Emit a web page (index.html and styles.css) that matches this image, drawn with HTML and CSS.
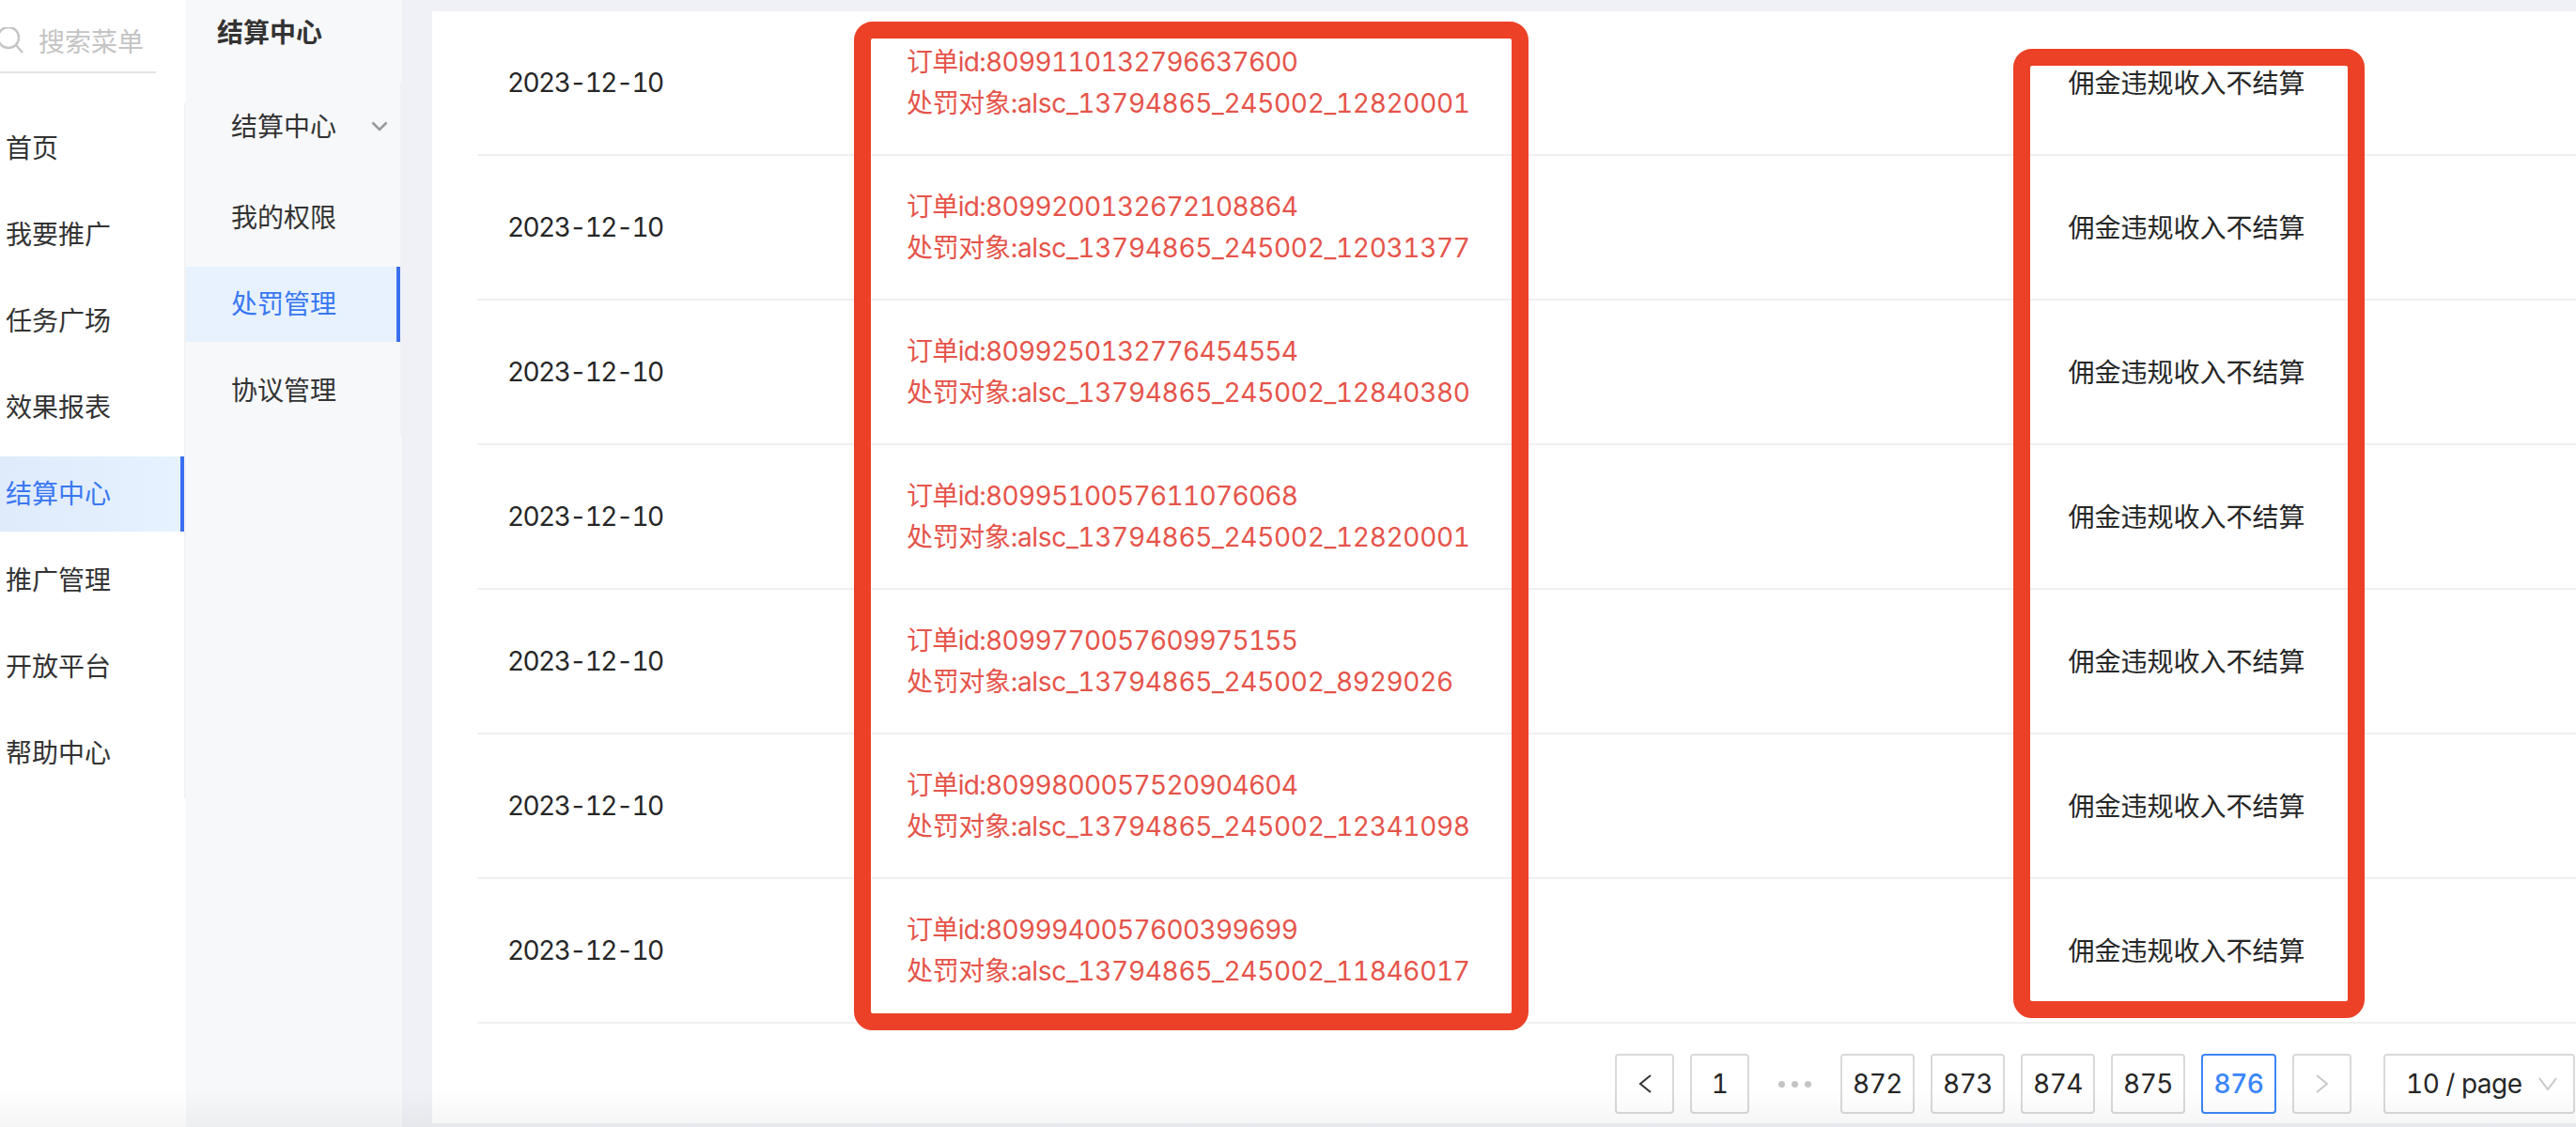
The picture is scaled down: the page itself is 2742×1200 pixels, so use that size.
FILE: index.html
```html
<!DOCTYPE html>
<html lang="zh">
<head>
<meta charset="utf-8">
<title>处罚管理</title>
<link rel="stylesheet" href="styles.css">
</head>
<body>
<div class="app">
  <aside class="nav">
    <div class="search">
      <svg class="search-icon" width="26" height="28" viewBox="0 0 26 28"><circle cx="10" cy="11" r="11" fill="none" stroke="#c4c4c4" stroke-width="2.4"/><path d="M18 19l7 8" fill="none" stroke="#c4c4c4" stroke-width="2.4"/></svg>
      <span>搜索菜单</span>
    </div>
    <ul class="nav-list">
      <li class="nav-item">首页</li>
      <li class="nav-item">我要推广</li>
      <li class="nav-item">任务广场</li>
      <li class="nav-item">效果报表</li>
      <li class="nav-item active">结算中心</li>
      <li class="nav-item">推广管理</li>
      <li class="nav-item">开放平台</li>
      <li class="nav-item">帮助中心</li>
    </ul>
  </aside>
  <aside class="subnav">
    <div class="subnav-title">结算中心</div>
    <ul class="subnav-list">
      <li class="sub-item first">结算中心
        <svg class="chev" width="18" height="11" viewBox="0 0 18 11"><path d="M1.500 1.500L9 9l7.500-7.500" fill="none" stroke="#999" stroke-width="2.6"/></svg>
      </li>
      <li class="sub-item">我的权限</li>
      <li class="sub-item active">处罚管理</li>
      <li class="sub-item">协议管理</li>
    </ul>
  </aside>
  <main class="card">
    <div class="table">
      <div class="row"><div class="date">2023-12-10</div><div class="info"><div class="oid">订单id:8099110132796637600</div><div class="tgt">处罚对象:alsc_13794865_245002_12820001</div></div><div class="result">佣金违规收入不结算</div></div>
      <div class="row"><div class="date">2023-12-10</div><div class="info"><div class="oid">订单id:8099200132672108864</div><div class="tgt">处罚对象:alsc_13794865_245002_12031377</div></div><div class="result">佣金违规收入不结算</div></div>
      <div class="row"><div class="date">2023-12-10</div><div class="info"><div class="oid">订单id:8099250132776454554</div><div class="tgt">处罚对象:alsc_13794865_245002_12840380</div></div><div class="result">佣金违规收入不结算</div></div>
      <div class="row"><div class="date">2023-12-10</div><div class="info"><div class="oid">订单id:8099510057611076068</div><div class="tgt">处罚对象:alsc_13794865_245002_12820001</div></div><div class="result">佣金违规收入不结算</div></div>
      <div class="row"><div class="date">2023-12-10</div><div class="info"><div class="oid">订单id:8099770057609975155</div><div class="tgt">处罚对象:alsc_13794865_245002_8929026</div></div><div class="result">佣金违规收入不结算</div></div>
      <div class="row"><div class="date">2023-12-10</div><div class="info"><div class="oid">订单id:8099800057520904604</div><div class="tgt">处罚对象:alsc_13794865_245002_12341098</div></div><div class="result">佣金违规收入不结算</div></div>
      <div class="row"><div class="date">2023-12-10</div><div class="info"><div class="oid">订单id:8099940057600399699</div><div class="tgt">处罚对象:alsc_13794865_245002_11846017</div></div><div class="result">佣金违规收入不结算</div></div>
    </div>
    <nav class="pager">
      <span class="btn icon"><svg width="14" height="20" viewBox="0 0 14 20"><path d="M13 1L2 10l11 9" fill="none" stroke="#333" stroke-width="2"/></svg></span>
      <span class="btn icon">1</span>
      <span class="dots"><i></i><i></i><i></i></span>
      <span class="btn">872</span>
      <span class="btn">873</span>
      <span class="btn">874</span>
      <span class="btn">875</span>
      <span class="btn current">876</span>
      <span class="btn icon"><svg width="14" height="20" viewBox="0 0 14 20"><path d="M1 1l11 9-11 9" fill="none" stroke="#c8c8c8" stroke-width="2"/></svg></span>
      <span class="select">10 / page<svg width="20" height="14" viewBox="0 0 20 14"><path d="M1 1l9 12 9-12" fill="none" stroke="#c8c8c8" stroke-width="2"/></svg></span>
    </nav>
  </main>
</div>
<div class="mark mark-info"></div>
<div class="mark mark-result"></div>
<div class="fade"></div>
</body>
</html>
```
FILE: styles.css
```css
* { box-sizing: border-box; }
html, body { margin: 0; height: 100%; }
body {
  width: 2742px;
  height: 1200px;
  overflow: hidden;
  position: relative;
  background: #f0f1f6;
  font-family: Inter, "Noto Sans CJK SC", sans-serif;
  font-size: 28px;
  font-variant-numeric: tabular-nums;
  color: #333;
}
ul { list-style: none; margin: 0; padding: 0; }
.app { display: flex; height: 1200px; }

.nav { width: 198px; background: #fff; flex: none; }
.search {
  display: flex;
  align-items: center;
  gap: 16px;
  width: 166px;
  height: 78px;
  padding-top: 10px;
  border-bottom: 2px solid #e4e4e4;
  color: #c4c4c4;
  overflow: hidden;
}
.search-icon { margin-left: -1px; flex: none; }
.search span { white-space: nowrap; }
.nav-list {
  margin-top: 32px;
  padding-top: 8px;
  height: 740px;
  border-right: 2px solid #f2f2f3;
}
.nav-item {
  height: 80px;
  margin-bottom: 12px;
  padding-left: 6px;
  line-height: 80px;
  width: 196px;
}
.nav-item.active {
  background: linear-gradient(90deg, #dfeafb, #e6f2ff);
  border-right: 4px solid #3a6ff0;
  color: #3a78f2;
}

.subnav { width: 230px; background: #f7f8fa; flex: none; }
.subnav-title { height: 88px; padding: 17px 0 0 33px; font-weight: 700; line-height: 36px; }
.subnav-list { height: 376px; padding-top: 8px; border-right: 2px solid #f0f2f6; }
.sub-item {
  height: 80px;
  margin-bottom: 12px;
  padding-left: 48px;
  line-height: 80px;
  position: relative;
}
.sub-item.first { margin-bottom: 16px; line-height: 78px; }
.chev { position: absolute; left: 197px; top: 33px; }
.sub-item.active {
  background: #e7f2fe;
  border-right: 4px solid #3a6ff0;
  color: #3a78f2;
}

.card {
  margin: 12px 0 4px 32px;
  flex: 1;
  min-width: 0;
  background: #fff;
  display: flex;
  flex-direction: column;
}
.table { margin-left: 48px; }
.row {
  display: grid;
  grid-template-columns: 425px 1162px 401px;
  align-items: center;
  height: 154px;
  padding-left: 32px;
  border-bottom: 2px solid #f0f0f0;
  color: #262626;
}
.date { letter-spacing: -1.6px; }
.info { color: #e5544a; line-height: 44px; white-space: nowrap; }
.oid { letter-spacing: -0.67px; }
.tgt { letter-spacing: -0.32px; }
.result { text-align: center; padding-bottom: 2px; }

.pager {
  display: flex;
  align-items: center;
  gap: 17px;
  margin-top: 32px;
  padding-left: 1259px;
  color: #262626;
  letter-spacing: -0.5px;
}
.btn {
  display: flex;
  align-items: center;
  justify-content: center;
  width: 79px;
  height: 64px;
  border: 2px solid #d9d9d9;
  border-radius: 4px;
  background: #fff;
}
.btn.icon { width: 63px; }
.btn.current { width: 80px; border-color: #3b86f7; color: #3b86f7; font-weight: 500; }
.dots {
  display: flex;
  justify-content: center;
  gap: 7px;
  width: 63px;
}
.dots i { width: 7px; height: 7px; border-radius: 50%; background: #c4c4c4; }
.select {
  display: flex;
  align-items: center;
  gap: 17px;
  width: 204px;
  height: 64px;
  margin-left: 17px;
  padding-left: 22px;
  border: 2px solid #d9d9d9;
  border-radius: 4px;
  background: #fff;
  flex: none;
}

.mark {
  position: absolute;
  border: 18px solid #ec4126;
  border-radius: 20px;
  pointer-events: none;
}
.mark-info { left: 909px; top: 23px; width: 718px; height: 1074px; }
.mark-result { left: 2143px; top: 52px; width: 374px; height: 1032px; }

.fade {
  position: absolute;
  left: 0;
  right: 0;
  bottom: 0;
  height: 40px;
  background: linear-gradient(180deg, rgba(0,0,0,0), rgba(0,0,0,.04));
  pointer-events: none;
}
```
